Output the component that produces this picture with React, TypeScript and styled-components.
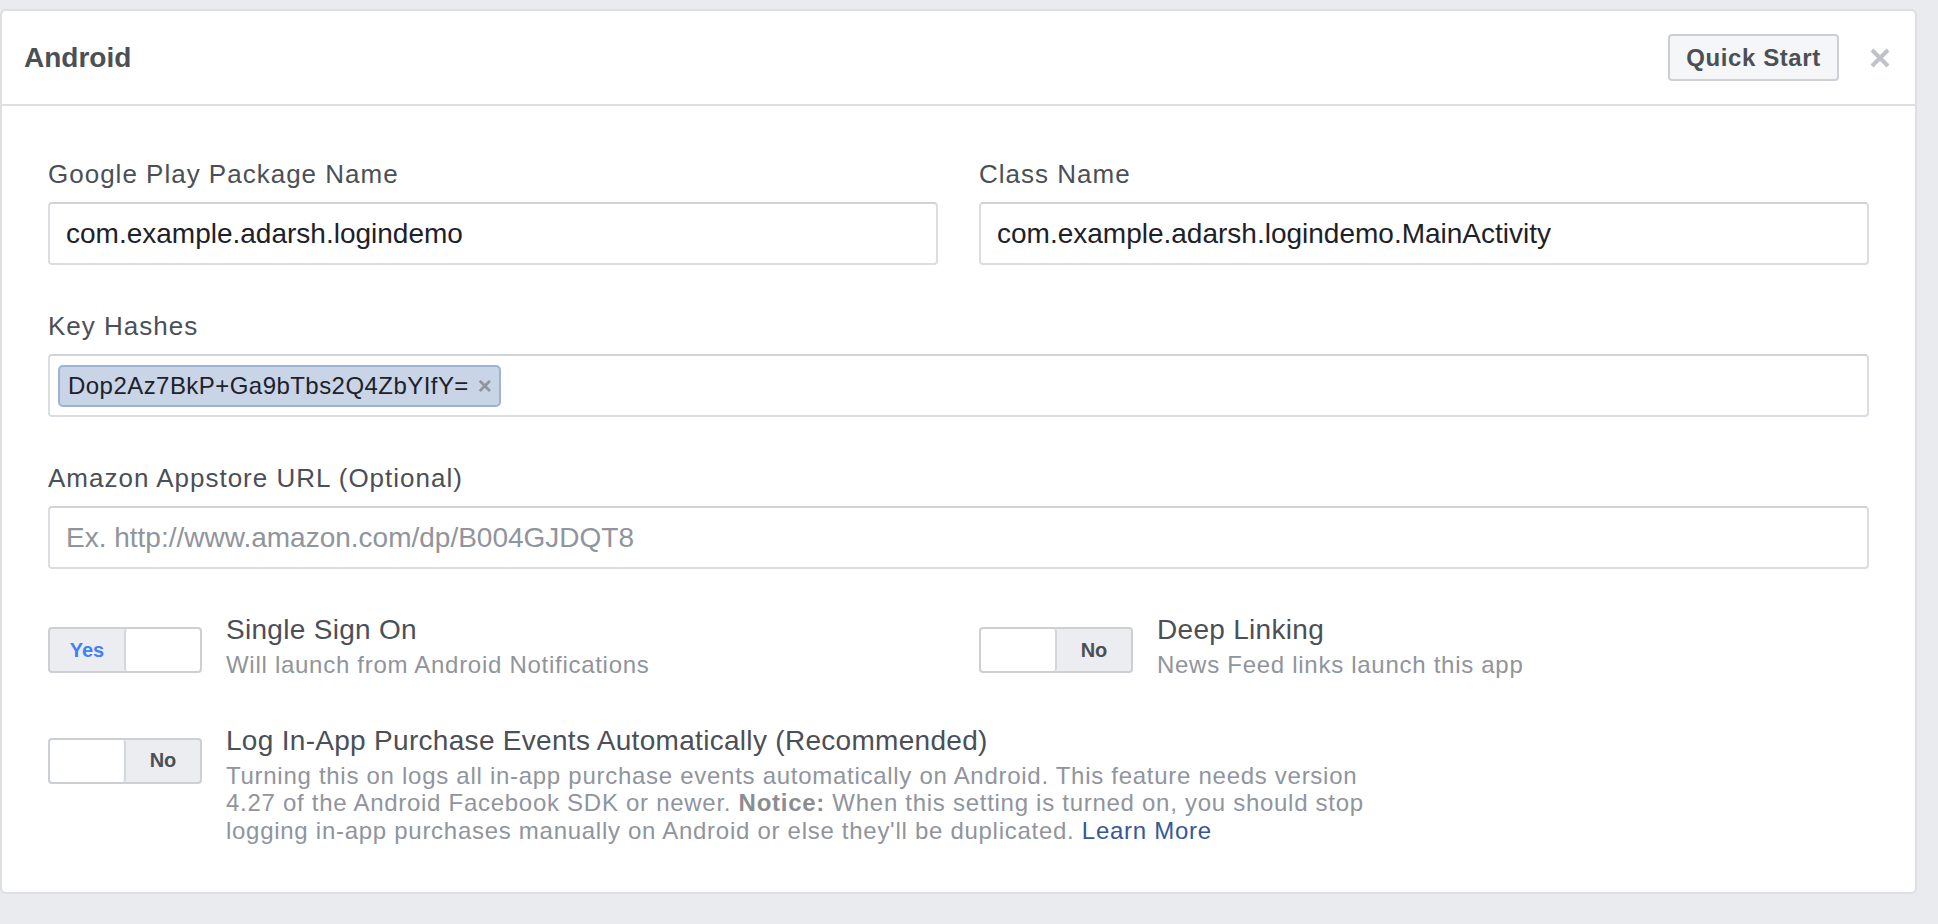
import React from "react";
import styled, { createGlobalStyle } from "styled-components";

const Global = createGlobalStyle`
  html, body { margin: 0; padding: 0; background: #e9ebee; }
  body { font-family: "Liberation Sans", Arial, sans-serif; }
  * { box-sizing: border-box; }
`;

const Page = styled.div`
  min-height: 924px;
  padding-top: 9px;
`;

const Card = styled.section`
  width: 1917px;
  background: #fff;
  border: 2px solid #dddfe2;
  border-radius: 6px;
`;

const Header = styled.header`
  display: flex;
  align-items: center;
  height: 95px;
  padding: 0 25px 0 22px;
  border-bottom: 2px solid #dddfe2;
`;

const Title = styled.h2`
  margin: 0;
  flex: 1;
  font-size: 28px;
  line-height: 32px;
  font-weight: bold;
  color: #4b4f56;
`;

const QuickStart = styled.button`
  width: 171px;
  height: 47px;
  padding: 0;
  border: 2px solid #ccd0d5;
  border-radius: 4px;
  background: #f5f6f7;
  color: #4b4f56;
  font-family: "Liberation Sans", Arial, sans-serif;
  font-size: 24px;
  font-weight: bold;
  letter-spacing: 0.6px;
`;

const Close = styled.span`
  display: flex;
  margin-left: 31px;
  width: 20px;
  height: 20px;
`;

const Body = styled.div`
  padding: 52px 46px 48px;
`;

const Columns = styled.div`
  display: grid;
  grid-template-columns: 890px 890px;
  column-gap: 41px;
`;

const Field = styled.div`
  margin-bottom: 45px;
`;

const Label = styled.label`
  display: block;
  margin-bottom: 12px;
  font-size: 26px;
  line-height: 32px;
  letter-spacing: 1px;
  color: #4b4f56;
`;

const TextInput = styled.div<{ $placeholder?: boolean }>`
  display: flex;
  align-items: center;
  height: 63px;
  padding: 0 16px;
  border: 2px solid #dadde1;
  border-top-color: #d0d3d8;
  border-radius: 4px;
  font-size: 28px;
  color: ${(p) => (p.$placeholder ? "#90949c" : "#1d2129")};
  white-space: nowrap;
`;

const TagBox = styled(TextInput)`
  padding: 0 8px;
`;

const Tag = styled.span`
  display: inline-flex;
  align-items: center;
  height: 42px;
  padding: 0 7px 0 8px;
  background: #c9d4e6;
  border: 2px solid #9db3d6;
  border-radius: 5px;
  font-size: 24px;
  letter-spacing: 0.45px;
  color: #1d2129;
`;

const TagRemove = styled.span`
  margin-left: 9px;
  font-size: 24px;
  font-weight: bold;
  color: #90949c;
`;

const ToggleGrid = styled(Columns)`
  margin-bottom: 46px;
`;

const ToggleRow = styled.div`
  display: flex;
  align-items: flex-start;
  gap: 24px;
`;

const Toggle = styled.div<{ $on: boolean }>`
  display: flex;
  flex-direction: ${(p) => (p.$on ? "row" : "row-reverse")};
  flex-shrink: 0;
  width: 154px;
  height: 46px;
  margin-top: 13px;
  border: 2px solid #ccd0d5;
  border-radius: 4px;
  background: #ebedf0;
  overflow: hidden;
`;

const ToggleText = styled.span<{ $on: boolean }>`
  flex: 1;
  display: flex;
  align-items: center;
  justify-content: center;
  font-size: 20px;
  font-weight: bold;
  color: ${(p) => (p.$on ? "#4080ff" : "#4b4f56")};
`;

const Knob = styled.span<{ $on: boolean }>`
  width: 76px;
  background: #fff;
  border-radius: 3px;
  ${(p) => (p.$on ? "border-left: 2px solid #d3d6db;" : "border-right: 2px solid #d3d6db;")}
`;

const OptionText = styled.div`
  display: flex;
  flex-direction: column;
`;

const OptionTitle = styled.div`
  font-size: 28px;
  line-height: 32px;
  letter-spacing: 0.3px;
  color: #4b4f56;
  white-space: nowrap;
`;

const OptionDesc = styled.div`
  margin-top: 5px;
  font-size: 24px;
  line-height: 27.5px;
  letter-spacing: 0.72px;
  color: #90949c;
  white-space: nowrap;
`;

const Strong = styled.b`
  font-weight: bold;
  color: #8a8d91;
`;

const Link = styled.a`
  color: #365899;
  text-decoration: none;
`;

function Switch({ on }: { on: boolean }) {
  return (
    <Toggle $on={on}>
      <ToggleText $on={on}>{on ? "Yes" : "No"}</ToggleText>
      <Knob $on={on} />
    </Toggle>
  );
}

export default function App() {
  return (
    <Page>
      <Global />
      <Card>
        <Header>
          <Title>Android</Title>
          <QuickStart>Quick Start</QuickStart>
          <Close>
            <svg width="20" height="20" viewBox="0 0 20 20">
              <path d="M2 2 L18 18 M18 2 L2 18" stroke="#bec3c9" strokeWidth="4" />
            </svg>
          </Close>
        </Header>
        <Body>
          <Columns>
            <Field>
              <Label>Google Play Package Name</Label>
              <TextInput>com.example.adarsh.logindemo</TextInput>
            </Field>
            <Field>
              <Label>Class Name</Label>
              <TextInput>com.example.adarsh.logindemo.MainActivity</TextInput>
            </Field>
          </Columns>
          <Field>
            <Label>Key Hashes</Label>
            <TagBox>
              <Tag>
                Dop2Az7BkP+Ga9bTbs2Q4ZbYIfY=
                <TagRemove>×</TagRemove>
              </Tag>
            </TagBox>
          </Field>
          <Field>
            <Label>Amazon Appstore URL (Optional)</Label>
            <TextInput $placeholder>Ex. http://www.amazon.com/dp/B004GJDQT8</TextInput>
          </Field>
          <ToggleGrid>
            <ToggleRow>
              <Switch on />
              <OptionText>
                <OptionTitle>Single Sign On</OptionTitle>
                <OptionDesc>Will launch from Android Notifications</OptionDesc>
              </OptionText>
            </ToggleRow>
            <ToggleRow>
              <Switch on={false} />
              <OptionText>
                <OptionTitle>Deep Linking</OptionTitle>
                <OptionDesc>News Feed links launch this app</OptionDesc>
              </OptionText>
            </ToggleRow>
          </ToggleGrid>
          <ToggleRow>
            <Switch on={false} />
            <OptionText>
              <OptionTitle>Log In-App Purchase Events Automatically (Recommended)</OptionTitle>
              <OptionDesc>
                Turning this on logs all in-app purchase events automatically on Android. This feature needs version
                <br />
                4.27 of the Android Facebook SDK or newer. <Strong>Notice:</Strong> When this setting is turned on, you should stop
                <br />
                logging in-app purchases manually on Android or else they'll be duplicated.{" "}
                <Link href="#">Learn More</Link>
              </OptionDesc>
            </OptionText>
          </ToggleRow>
        </Body>
      </Card>
    </Page>
  );
}
